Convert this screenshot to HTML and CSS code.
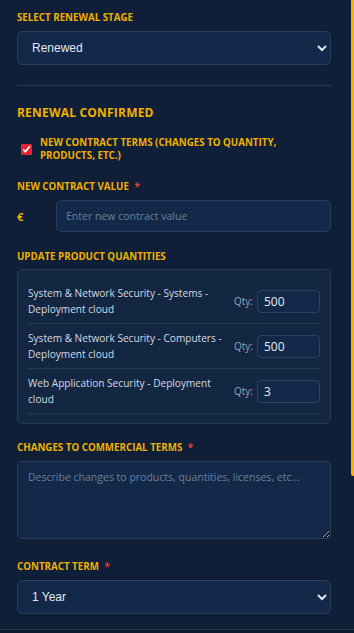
FILE: index.html
```html
<!DOCTYPE html>
<html>
<head>
<meta charset="utf-8">
<link rel="stylesheet" href="styles.css">
</head>
<body>
<div class="panel">
  <label class="lbl">Select Renewal Stage</label>
  <select class="sel"><option>Renewed</option></select>

  <hr class="divider">

  <h3 class="section-title">Renewal Confirmed</h3>

  <label class="check">
    <input type="checkbox" checked>
    <span>New contract terms (changes to quantity, products, etc.)</span>
  </label>

  <label class="lbl lbl-value">New contract value <span class="req">*</span></label>
  <div class="money-row">
    <span class="currency">€</span>
    <input class="inp" type="text" placeholder="Enter new contract value">
  </div>

  <label class="lbl lbl-products">Update product quantities</label>
  <div class="product-box">
    <div class="product-row">
      <div class="product-name">System &amp; Network Security - Systems - Deployment cloud</div>
      <div class="qty"><span class="qty-label">Qty:</span><input class="qty-input" type="text" value="500"></div>
    </div>
    <div class="product-row">
      <div class="product-name">System &amp; Network Security - Computers - Deployment cloud</div>
      <div class="qty"><span class="qty-label">Qty:</span><input class="qty-input" type="text" value="500"></div>
    </div>
    <div class="product-row">
      <div class="product-name">Web Application Security - Deployment cloud</div>
      <div class="qty"><span class="qty-label">Qty:</span><input class="qty-input" type="text" value="3"></div>
    </div>
  </div>

  <label class="lbl lbl-changes">Changes to commercial terms <span class="req">*</span></label>
  <textarea class="txt" placeholder="Describe changes to products, quantities, licenses, etc..."></textarea>

  <label class="lbl lbl-term">Contract term <span class="req">*</span></label>
  <select class="sel"><option>1 Year</option></select>
</div>
<div class="footer"></div>
<div class="scroll-thumb"></div>
</body>
</html>
```

FILE: styles.css
```css
html, body {
  margin: 0;
  padding: 0;
  background: #0f1f37;
  overflow: hidden;
}
body {
  font-family: "Open Sans", "Noto Sans", sans-serif;
  color: #d6dde6;
}
.panel {
  width: 314px;
  padding: 11px 0 0 17px;
}
.lbl {
  display: block;
  font-size: 9.75px;
  line-height: 14px;
  font-weight: 700;
  text-transform: uppercase;
  color: #f0b000;
  margin-bottom: 6px;
}
.req {
  color: #e23b3b;
  margin-left: 3px;
}
.sel {
  display: block;
  width: 314px;
  height: 34px;
  box-sizing: border-box;
  background: #12294a;
  border: 1px solid #263d5c;
  border-radius: 5px;
  color: #e2e8f0;
  font-family: "Liberation Sans", Arial, sans-serif;
  font-size: 12px;
  padding: 0 10px;
  color-scheme: dark;
  outline: none;
}
.divider {
  border: 0;
  border-top: 1px solid #243853;
  margin: 20px 0 0 0;
  height: 0;
}
.section-title {
  margin: 19px 0 0 0;
  font-size: 12px;
  line-height: 16px;
  letter-spacing: 0.2px;
  font-weight: 700;
  text-transform: uppercase;
  color: #f0b000;
}
.check {
  display: flex;
  align-items: center;
  margin-top: 14.5px;
}
.check input {
  width: 11px;
  height: 11px;
  margin: 0 8px 0 4px;
  accent-color: #e0262c;
  flex: none;
}
.check span {
  font-size: 9.75px;
  line-height: 13.5px;
  font-weight: 700;
  text-transform: uppercase;
  color: #f0b000;
}
.lbl-value { margin-top: 17px; margin-bottom: 6.5px; }
.money-row {
  display: flex;
  align-items: center;
}
.currency {
  width: 39px;
  font-size: 11px;
  font-weight: 700;
  color: #f0b000;
}
.inp {
  flex: 1;
  height: 32px;
  box-sizing: border-box;
  background: #12294a;
  border: 1px solid #263d5c;
  border-radius: 5px;
  padding: 0 9px;
  font-family: "Open Sans", "Noto Sans", sans-serif;
  font-size: 10.5px;
  color: #e2e8f0;
  outline: none;
}
.inp::placeholder, .txt::placeholder { color: #6c7f98; }
.lbl-products { margin-top: 17.5px; margin-bottom: 5.5px; }
.product-box {
  background: #132743;
  border: 1px solid #263a55;
  border-radius: 5px;
  padding: 9px 10px;
}
.product-row {
  display: flex;
  align-items: center;
  gap: 6px;
  padding: 6px 0;
  border-bottom: 1px solid #24384f;
}
.product-name {
  flex: 1;
  font-size: 10.1px;
  line-height: 16px;
  color: #d2dae4;
}
.qty {
  display: flex;
  align-items: center;
  gap: 4px;
}
.qty-label {
  font-size: 10px;
  color: #93a4b8;
}
.qty-input {
  width: 63px;
  height: 23px;
  box-sizing: border-box;
  background: #12294a;
  border: 1px solid #2b4262;
  border-radius: 4px;
  padding: 0 6px;
  font-family: "Open Sans", "Noto Sans", sans-serif;
  font-size: 12px;
  color: #e8edf3;
  outline: none;
}
.lbl-changes { margin-top: 16.5px; margin-bottom: 6.5px; }
.txt {
  display: block;
  width: 314px;
  height: 78px;
  box-sizing: border-box;
  background: #12294a;
  border: 1px solid #263d5c;
  border-radius: 5px;
  padding: 8px 10px;
  font-family: "Open Sans", "Noto Sans", sans-serif;
  font-size: 10.5px;
  color: #e2e8f0;
  resize: vertical;
  color-scheme: dark;
  outline: none;
}
.lbl-term { margin-top: 21px; margin-bottom: 6px; }
.footer {
  margin-top: 15px;
  border-top: 1px solid #22354e;
  height: 20px;
  background: #0c1a2f;
}
.scroll-thumb {
  position: fixed;
  top: 0;
  right: 0;
  width: 3px;
  height: 476px;
  background: #f2b200;
  border-bottom-left-radius: 2px;
}
```
